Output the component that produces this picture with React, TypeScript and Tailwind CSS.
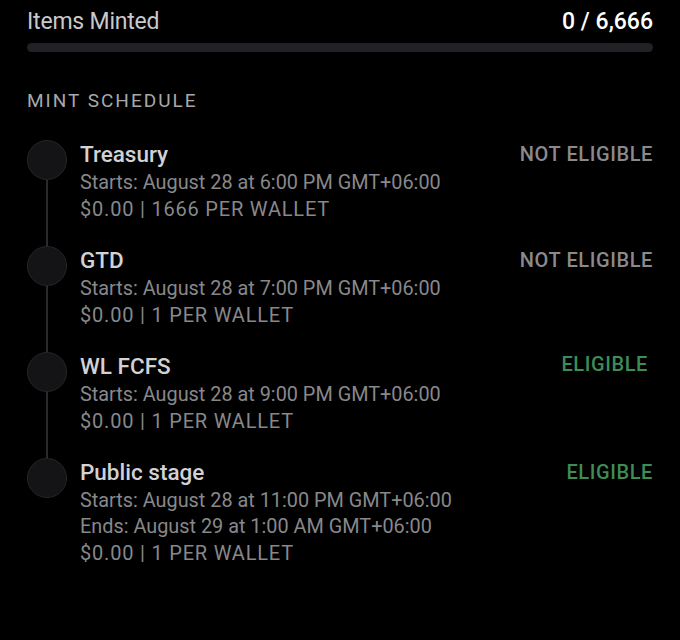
import React from "react";

type Stage = {
  name: string;
  lines: string[];
  price: string;
  eligible: boolean;
};

const stages: Stage[] = [
  {
    name: "Treasury",
    lines: ["Starts: August 28 at 6:00 PM GMT+06:00"],
    price: "$0.00 | 1666 PER WALLET",
    eligible: false,
  },
  {
    name: "GTD",
    lines: ["Starts: August 28 at 7:00 PM GMT+06:00"],
    price: "$0.00 | 1 PER WALLET",
    eligible: false,
  },
  {
    name: "WL FCFS",
    lines: ["Starts: August 28 at 9:00 PM GMT+06:00"],
    price: "$0.00 | 1 PER WALLET",
    eligible: true,
  },
  {
    name: "Public stage",
    lines: [
      "Starts: August 28 at 11:00 PM GMT+06:00",
      "Ends: August 29 at 1:00 AM GMT+06:00",
    ],
    price: "$0.00 | 1 PER WALLET",
    eligible: true,
  },
];

const App: React.FC = () => {
  return (
    <div className="w-[680px] h-[640px] bg-black px-[27px] pt-[8px] font-['Roboto',sans-serif] overflow-hidden">
      {/* Items minted */}
      <div className="flex items-center justify-between h-[28px]">
        <span className="text-[23px] text-[#c9c9cc] tracking-[-0.2px]">Items Minted</span>
        <span className="text-[23px] font-medium text-white">0 / 6,666</span>
      </div>
      <div className="mt-[7px] h-[9px] w-full rounded-full bg-[#222226]" />

      <div className="mt-[38px] text-[19px] leading-[21px] tracking-[2px] text-[#a8a8ab]">
        MINT SCHEDULE
      </div>

      {/* Schedule */}
      <div className="mt-[29px] flex flex-col">
        {stages.map((s, i) => (
          <div key={s.name} className="flex">
            <div className="relative w-[53px] shrink-0">
              <div className="w-[40px] h-[40px] rounded-full bg-[#141417] border border-[#26262a]" />
              {i < stages.length - 1 && (
                <div className="absolute left-[19px] top-[40px] bottom-[-2px] w-[2px] bg-[#2a2a2d]" />
              )}
            </div>
            <div className={`flex-1 ${i < stages.length - 1 ? "pb-[24px]" : ""}`}>
              <div className="flex items-start justify-between">
                <div className="text-[22.5px] leading-[28px] font-medium text-[#d2d2d4]">{s.name}</div>
                <div
                  className={`text-[20px] leading-[28px] font-medium tracking-[0.6px] ${
                    s.eligible ? "text-[#3f8c55]" : "text-[#8a8a8d]"
                  } ${s.name === "WL FCFS" ? "mr-[5px] -mt-[2px]" : ""}`}
                >
                  {s.eligible ? "ELIGIBLE" : "NOT ELIGIBLE"}
                </div>
              </div>
              <div className="mt-[2px]">
                {s.lines.map((l) => (
                  <div key={l} className="text-[19.85px] leading-[26px] text-[#88888b]">
                    {l}
                  </div>
                ))}
                <div className="text-[20px] leading-[26px] tracking-[0.8px] text-[#88888b]">{s.price}</div>
              </div>
            </div>
          </div>
        ))}
      </div>
    </div>
  );
};

export default App;
